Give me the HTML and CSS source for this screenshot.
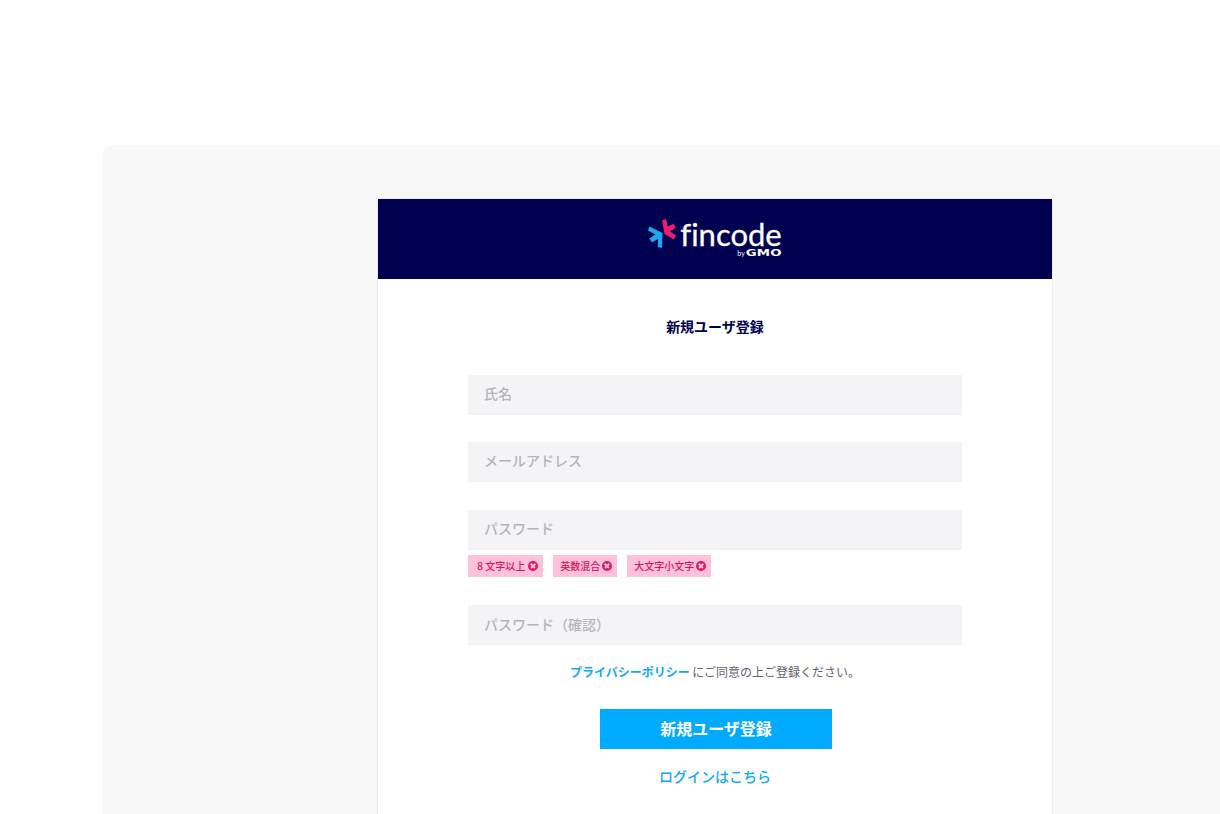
FILE: index.html
```html
<!DOCTYPE html>
<html lang="ja">
<head>
    <meta charset="UTF-8">
    <title>fincode 新規ユーザ登録</title>
    <link rel="stylesheet" href="styles.css">
</head>
<body>
    <div class="panel">
        <div class="card">
            <!-- Logo -->
            <header class="card-header">
                <div class="logo">
                    <svg class="logo-mark" width="28" height="29" viewBox="0 0 28 29">
                        <path d="M14 1.2 L18 0 L19.8 7.5 L25.5 4.8 L27.8 8.8 L22 12.3 L28 16.5 L26 20.5 L16.5 15 Z" fill="#e5206e"/>
                        <path d="M1.5 7.5 L14.5 14 L14 28.8 L9.8 28.3 L10 20 L4 23.5 L1.3 19.5 L7.5 15.5 L0 11.5 Z" fill="#1aa9f0"/>
                    </svg>
                    <div class="logo-text">
                        <span class="logo-name">fincode</span>
                        <span class="logo-by"><span>by</span><b>GMO</b></span>
                    </div>
                </div>
            </header>

            <!-- Form -->
            <div class="card-body">
                <h1 class="title">新規ユーザ登録</h1>
                <div class="field">氏名</div>
                <div class="field">メールアドレス</div>
                <div class="field">パスワード</div>
                <div class="tags">
                    <span class="tag tag-long">&nbsp;8 文字以上<i class="tag-x"></i></span>
                    <span class="tag">英数混合<i class="tag-x"></i></span>
                    <span class="tag">大文字小文字<i class="tag-x"></i></span>
                </div>
                <div class="field">パスワード（確認）</div>
                <p class="policy"><a href="#">プライバシーポリシー</a> にご同意の上ご登録ください。</p>
                <button class="submit">新規ユーザ登録</button>
                <a class="login" href="#">ログインはこちら</a>
            </div>
        </div>
    </div>
</body>
</html>
```

FILE: styles.css
```css
/* Page */
html, body {
    height: 814px;
    overflow: hidden;
}

body {
    margin: 0;
    padding: 145px 0 0 102px;
    box-sizing: border-box;
    background-color: #fff;
    font-family: 'Noto Sans CJK JP', 'Noto Sans', sans-serif;
}

.panel {
    height: 669px;
    padding: 54px 0 0 276px;
    box-sizing: border-box;
    background-color: #f8f8f9;
    border-radius: 12px 0 0 0;
    overflow: hidden;
}

/* Card */
.card {
    width: 674px;
    height: 640px;
    background-color: #fff;
    box-shadow: 0 0 2px rgba(0, 0, 80, 0.12);
}

.card-header {
    height: 80px;
    background-color: #000050;
    display: flex;
    justify-content: center;
    padding-top: 20px;
    box-sizing: border-box;
}

.logo {
    display: flex;
    align-items: flex-start;
    gap: 4px;
    color: #fff;
}

.logo-text {
    display: flex;
    flex-direction: column;
    align-items: flex-end;
}

.logo-name {
    font-family: 'Lato', sans-serif;
    font-size: 31px;
    line-height: 30px;
    font-variant-ligatures: none;
    -webkit-text-stroke: 0.3px #fff;
}

.logo-by {
    display: flex;
    align-items: center;
    height: 8px;
    font-family: 'Lato', sans-serif;
    font-size: 7px;
    line-height: 8px;
}

.logo-by b {
    margin-left: 11px;
    font-family: 'DejaVu Sans', sans-serif;
    font-size: 9.5px;
    letter-spacing: 0.2px;
    white-space: nowrap;
    transform: scaleX(1.4);
    transform-origin: right center;
}

/* Form */
.card-body {
    width: 494px;
    margin-left: 90px;
    display: flex;
    flex-direction: column;
}

.title {
    margin: 38px 0 0;
    height: 18px;
    font-size: 14px;
    line-height: 18px;
    font-weight: 700;
    text-align: center;
    color: #000050;
}

.field {
    height: 40px;
    margin-top: 27.4px;
    padding-left: 16px;
    background-color: #f4f4f7;
    border-bottom: 1px solid #f0f0f2;
    box-sizing: border-box;
    font-size: 14px;
    font-weight: 500;
    line-height: 37px;
    color: #b4b4ba;
}

.card-body .title + .field {
    margin-top: 40px;
}

.tags {
    display: flex;
    gap: 10px;
    margin-top: 5px;
    margin-bottom: 1px;
}

.tags + .field {
    line-height: 39px;
}

.tag {
    height: 22px;
    padding: 0 5px 0 7px;
    display: flex;
    align-items: center;
    gap: 2px;
    background-color: #ffc0d9;
    color: #d4145f;
    font-size: 10px;
    font-weight: 500;
}

.tag-long {
    gap: 3px;
}

.tag-x {
    position: relative;
    width: 10px;
    height: 10px;
    border-radius: 50%;
    background-color: #dc1767;
}

.tag-x::before,
.tag-x::after {
    content: "";
    position: absolute;
    left: 2px;
    top: 4.25px;
    width: 6px;
    height: 1.5px;
    background-color: #ffc0d9;
    transform: rotate(45deg);
}

.tag-x::after {
    transform: rotate(-45deg);
}

.policy {
    margin: 18px 0 0;
    height: 18px;
    font-size: 12px;
    line-height: 18px;
    text-align: center;
    color: #5f5f6e;
}

.policy a {
    color: #10a8f5;
    font-weight: 700;
    text-decoration: none;
}

.submit {
    width: 232px;
    height: 40px;
    margin: 28px 0 0 132px;
    padding: 0 0 2px;
    border: none;
    background-color: #00aaff;
    color: #fff;
    font-family: inherit;
    font-size: 16px;
    font-weight: 700;
}

.login {
    margin-top: 17px;
    font-size: 14px;
    line-height: 20px;
    font-weight: 500;
    text-align: center;
    color: #10a8f5;
    text-decoration: none;
}
```
